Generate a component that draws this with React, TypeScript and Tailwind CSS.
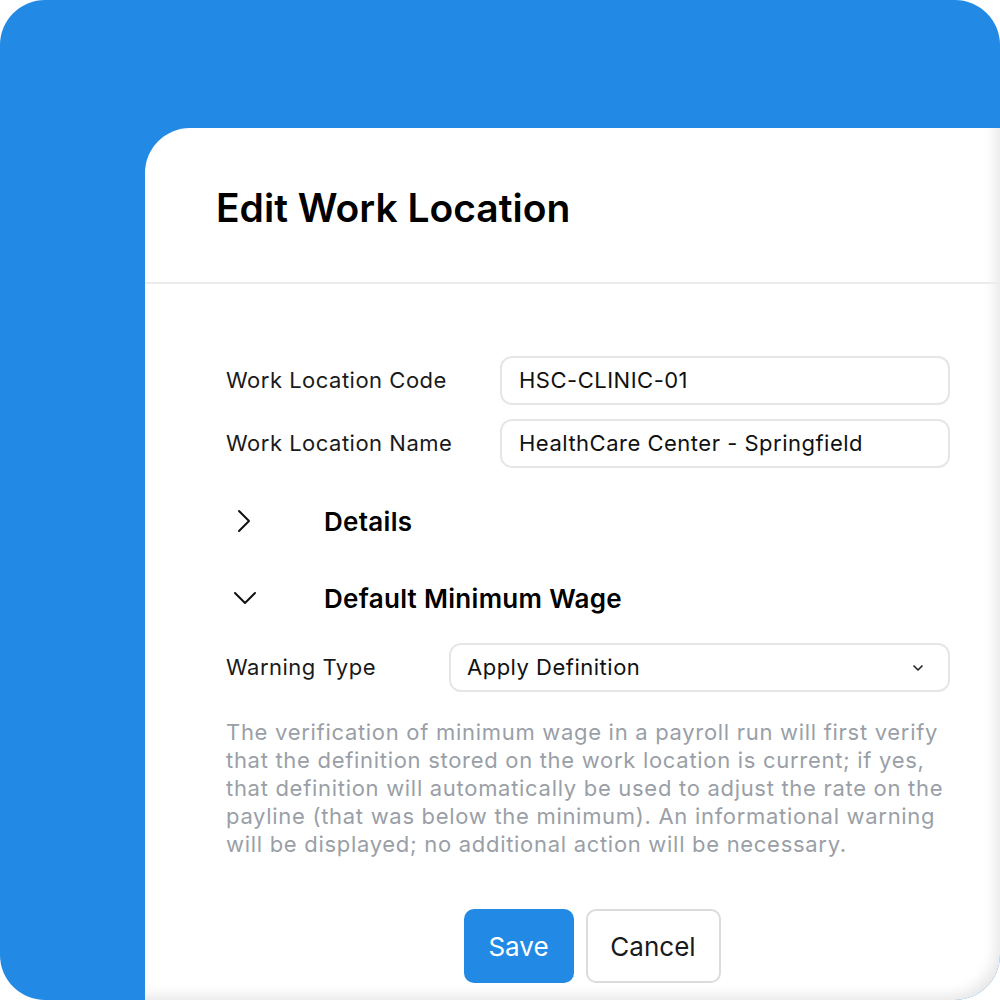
import { ChevronDown } from 'lucide-react'

function Field({ label, value }: { label: string; value: string }) {
  return (
    <div className="flex items-center">
      <span className="w-[274px] shrink-0 text-[22px] tracking-[0.5px] text-[#1a1a1a]">{label}</span>
      <div className="flex-1 h-[49px] flex items-center px-[17px] rounded-[12px] border-2 border-[#e6e6e6] text-[22px] tracking-[0.5px] text-[#111]">
        {value}
      </div>
    </div>
  )
}

export default function App() {
  return (
    <div className="w-[1000px] h-[1000px] bg-white" style={{ fontFamily: 'Inter, "Noto Sans", sans-serif' }}>
      <div className="w-full h-full rounded-[45px] bg-[#228ae4] overflow-hidden flex flex-col pl-[145px] pt-[128px]">
        {/* card */}
        <div className="flex-1 bg-white rounded-tl-[45px] rounded-br-[40px] flex flex-col shadow-[inset_-12px_-12px_14px_-8px_rgba(0,0,0,0.10)]">
          <div className="h-[156px] border-b-2 border-[#ececec] flex items-center pl-[71px]">
            <h1 className="text-[39px] font-semibold text-black mt-[7px]">Edit Work Location</h1>
          </div>

          <div className="pl-[81px] pr-[50px] pt-[72px] flex flex-col">
            <div className="flex flex-col gap-[14px]">
              <Field label="Work Location Code" value="HSC-CLINIC-01" />
              <Field label="Work Location Name" value="HealthCare Center - Springfield" />
            </div>

            {/* Details */}
            <div className="flex items-center h-[40px] mt-[33px]">
              <div className="w-[98px] shrink-0 pl-[11px]">
                <svg width="14" height="24" viewBox="0 0 14 24" fill="none" stroke="#111" strokeWidth="2" strokeLinecap="round" strokeLinejoin="round">
                  <polyline points="2,2 12,12 2,22" />
                </svg>
              </div>
              <span className="text-[26px] font-semibold tracking-[0.3px] text-black">Details</span>
            </div>

            {/* Default Minimum Wage */}
            <div className="flex items-center h-[40px] mt-[37px]">
              <div className="w-[98px] shrink-0 pl-[7px]">
                <svg width="24" height="14" viewBox="0 0 24 14" fill="none" stroke="#111" strokeWidth="2" strokeLinecap="round" strokeLinejoin="round">
                  <polyline points="2,2 12,12 22,2" />
                </svg>
              </div>
              <span className="text-[26px] font-semibold tracking-[0.3px] text-black">Default Minimum Wage</span>
            </div>

            <div className="flex items-center mt-[25px]">
              <span className="w-[223px] shrink-0 text-[22px] tracking-[0.5px] text-[#1a1a1a]">Warning Type</span>
              <div className="flex-1 h-[49px] flex items-center justify-between pl-[16px] pr-[22px] rounded-[12px] border-2 border-[#e6e6e6] text-[22px] tracking-[0.5px] text-[#111]">
                <span>Apply Definition</span>
                <ChevronDown size={16} strokeWidth={2.5} className="text-[#222]" />
              </div>
            </div>

            <p className="mt-[26px] text-[22px] leading-[28px] tracking-[0.7px] text-[#9a9fa7]">
              The verification of minimum wage in a payroll run will first verify that the definition stored on the work location is current; if yes, that definition will automatically be used to adjust the rate on the payline (that was below the minimum). An informational warning will be displayed; no additional action will be necessary.
            </p>

            <div className="flex justify-center gap-[12px] mt-[51px] pl-[8px]">
              <button className="w-[110px] h-[74px] rounded-[10px] bg-[#228ae4] text-white text-[26px]">Save</button>
              <button className="w-[135px] h-[74px] rounded-[10px] border-2 border-[#dcdcdc] bg-white text-[#1a1a1a] text-[26px]">Cancel</button>
            </div>
          </div>
        </div>
      </div>
    </div>
  )
}
